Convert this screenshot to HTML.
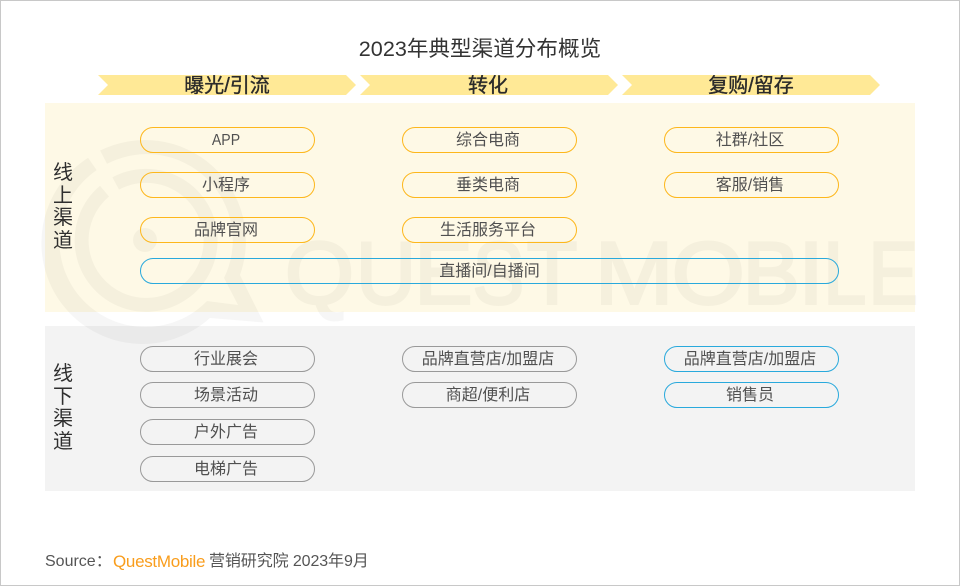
<!DOCTYPE html>
<html lang="zh">
<head>
<meta charset="utf-8">
<style>
html,body{margin:0;padding:0;background:#fff}
#p{position:relative;width:960px;height:586px;overflow:hidden;background:#fff;font-family:"Liberation Sans","Noto Sans CJK SC",sans-serif;color:#444}
#p div{position:absolute;box-sizing:border-box}
.frame{left:0;top:0;width:960px;height:586px;border:1px solid #c8c8c8}
.t{white-space:nowrap;text-align:center}
.pill{width:175px;height:26px;border-radius:13px;border:1px solid #999;padding-right:3px;text-align:center;font-size:16px;line-height:26px;color:#505050;white-space:nowrap;font-weight:400}
.y{border-color:#fdb71c}.b{border-color:#29a9dc}
.c1{left:140px}.c2{left:402px}.c3{left:664px}
.chv{top:75px;width:258px;height:20px;background:#ffe996;clip-path:polygon(0 0,248px 0,258px 10px,248px 20px,0 20px,10px 10px);text-align:center;font-size:20px;line-height:22px;color:#2a2a2a;font-weight:400;-webkit-text-stroke:.35px #2a2a2a;white-space:nowrap}
.side{left:53px;width:20px;font-size:20px;line-height:22.5px;color:#2f2f2f;text-align:center}
svg{position:absolute;left:0;top:0}
</style>
</head>
<body>
<div id="p">
  <div style="left:45px;top:103px;width:870px;height:209px;background:#fef9e6"></div>
  <div style="left:45px;top:326px;width:870px;height:165px;background:#f3f3f3"></div>

  <svg width="960" height="586" viewBox="0 0 960 586">
    <g opacity=".033" fill="#000">
      <path fill-rule="evenodd" d="M100.1 150.5A101 101 0 0 1 240 275L263.5 322.5L210 318A101 101 0 1 1 88.1 157.8L96.7 170.1A86 86 0 1 0 207 301L238 305L224 278A86 86 0 0 0 107 163.9Z"/>
      <path d="M115.7 183.5A64.5 64.5 0 1 1 104.5 191.1" fill="none" stroke="#000" stroke-width="14"/>
      <circle cx="145" cy="240" r="12"/>
      <g font-family="Liberation Sans" font-size="88" stroke="#000" stroke-width="3">
        <text x="285" y="303.5" textLength="69" lengthAdjust="spacingAndGlyphs">Q</text>
        <text x="356" y="303.5" textLength="60" lengthAdjust="spacingAndGlyphs">U</text>
        <text x="414.5" y="303.5" textLength="58" lengthAdjust="spacingAndGlyphs">E</text>
        <text x="472.6" y="303.5" textLength="51.5" lengthAdjust="spacingAndGlyphs">S</text>
        <text x="526.9" y="303.5" textLength="50.4" lengthAdjust="spacingAndGlyphs">T</text>
        <text x="594.9" y="303.5" textLength="78.5" lengthAdjust="spacingAndGlyphs">M</text>
        <text x="671.8" y="303.5" textLength="73" lengthAdjust="spacingAndGlyphs">O</text>
        <text x="742.7" y="303.5" textLength="57" lengthAdjust="spacingAndGlyphs">B</text>
        <text x="798.5" y="303.5" textLength="25" lengthAdjust="spacingAndGlyphs">I</text>
        <text x="823.3" y="303.5" textLength="43" lengthAdjust="spacingAndGlyphs">L</text>
        <text x="868.6" y="303.5" textLength="49.4" lengthAdjust="spacingAndGlyphs">E</text>
      </g>
    </g>
  </svg>

  <div class="t" style="left:280px;top:34px;width:400px;font-size:21.6px;line-height:30px;color:#333">2023年典型渠道分布概览</div>

  <div class="chv" style="left:98px">曝光/引流</div>
  <div class="chv" style="left:360px;padding-right:2px">转化</div>
  <div class="chv" style="left:622px">复购/留存</div>

  <div class="side" style="top:162px">线<br>上<br>渠<br>道</div>
  <div class="side" style="top:363px">线<br>下<br>渠<br>道</div>

  <div class="pill y c1" style="top:127px"><span style="display:inline-block;transform:scaleX(.88)">APP</span></div>
  <div class="pill y c2" style="top:127px">综合电商</div>
  <div class="pill y c3" style="top:127px">社群/社区</div>
  <div class="pill y c1" style="top:172px">小程序</div>
  <div class="pill y c2" style="top:172px">垂类电商</div>
  <div class="pill y c3" style="top:172px">客服/销售</div>
  <div class="pill y c1" style="top:217px">品牌官网</div>
  <div class="pill y c2" style="top:217px">生活服务平台</div>
  <div class="pill b c1" style="top:258px;width:699px;padding-right:0">直播间/自播间</div>

  <div class="pill c1" style="top:346px">行业展会</div>
  <div class="pill c2" style="top:346px">品牌直营店/加盟店</div>
  <div class="pill b c3" style="top:346px">品牌直营店/加盟店</div>
  <div class="pill c1" style="top:382px">场景活动</div>
  <div class="pill c2" style="top:382px">商超/便利店</div>
  <div class="pill b c3" style="top:382px">销售员</div>
  <div class="pill c1" style="top:419px">户外广告</div>
  <div class="pill c1" style="top:456px">电梯广告</div>

  <div style="left:45px;top:550px;font-size:16px;line-height:24px;color:#555;white-space:nowrap">Source：</div>
  <div style="left:113px;top:550px;font-size:17px;line-height:24px;color:#f99d1c;white-space:nowrap;letter-spacing:-.3px">QuestMobile</div>
  <div style="left:209px;top:550px;font-size:16px;line-height:24px;color:#555;white-space:nowrap;letter-spacing:-.1px">营销研究院 2023年9月</div>

  <div class="frame"></div>
</div>
</body>
</html>
